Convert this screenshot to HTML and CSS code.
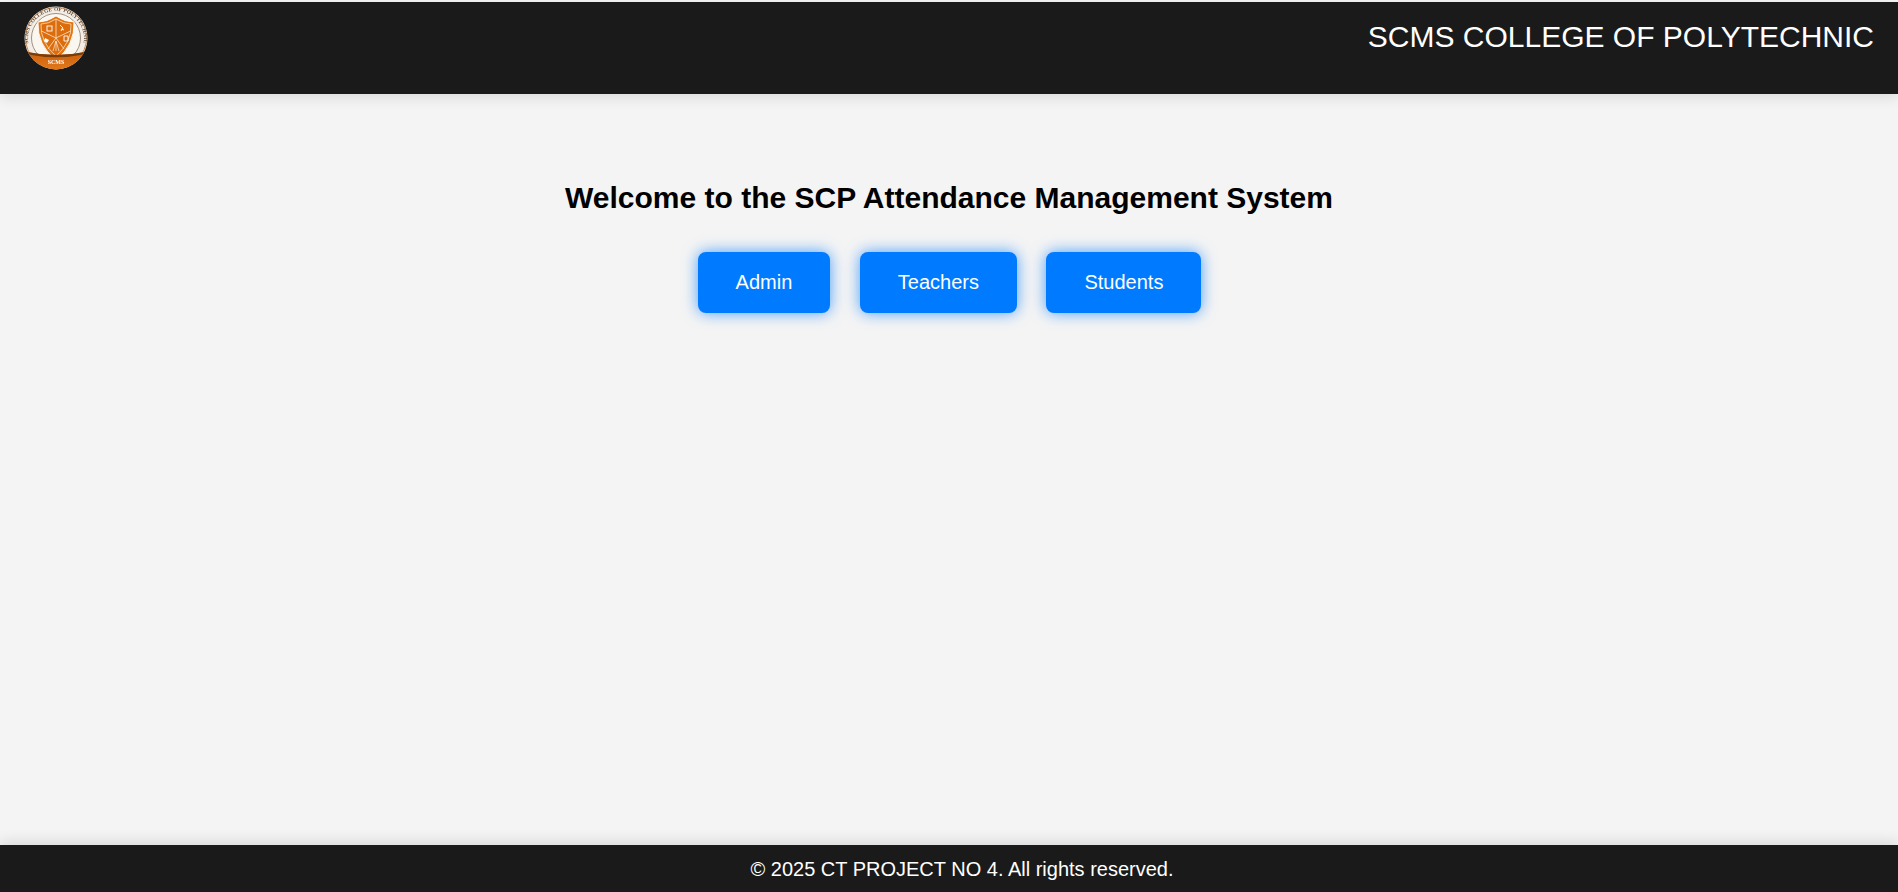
FILE: index.html
```html
<!DOCTYPE html>
<html lang="en">
<head>
<meta charset="utf-8">
<title>SCP Attendance Management System</title>
<link rel="stylesheet" href="styles.css">
</head>
<body>
<header class="site-header">
  <svg class="logo" viewBox="0 0 64 64" aria-label="SCMS logo">
    <defs>
      <path id="ring" d="M5.500 42A28 28 0 1 1 58.500 42"/>
      <clipPath id="disc"><circle cx="32" cy="32" r="31.500"/></clipPath>
      <linearGradient id="band" x1="0" y1="0" x2="0" y2="1">
        <stop offset="0" stop-color="#c9600c"/>
        <stop offset="1" stop-color="#e2791c"/>
      </linearGradient>
    </defs>
    <circle cx="32" cy="32" r="31.500" fill="#f3ede5"/>
    <circle cx="32" cy="32" r="30.500" fill="none" stroke="#c98a50" stroke-width="1"/>
    <circle cx="32" cy="32" r="24.500" fill="#faf6f0" stroke="#8a7a68" stroke-width=".8"/>
    <text class="logo-ring"><textPath href="#ring" startOffset="50%" text-anchor="middle">SCMS COLLEGE OF POLYTECHNIC</textPath></text>
    <path d="M32 10 Q41 16 50 16 Q51 39 32 54 Q13 39 14 16 Q23 16 32 10Z" fill="#e27510" stroke="#fff" stroke-width=".9"/>
    <path d="M32 13 Q39.500 18 47 18 Q48 36 32 50 Q16 36 17 18 Q24.500 18 32 13Z" fill="#dc6d0d" stroke="#f8dfc4" stroke-width=".8"/>
    <path d="M32 13V32M32 32L17.500 25M32 32L46.500 25M32 32L24 43M32 32L40 43" stroke="#fbe6cf" stroke-width=".8" fill="none"/>
    <rect x="23" y="20" width="5" height="5" fill="none" stroke="#fff" stroke-width=".9"/>
    <path d="M36 19l3 3-2 3M37 23l3 1" stroke="#fff" stroke-width=".9" fill="none"/>
    <path d="M21 32l4 2-2 3-3-2z" fill="#fff"/>
    <path d="M40 30h4v5h-4z" fill="none" stroke="#fff" stroke-width=".9"/>
    <path d="M32 35l-3 10M32 35l3 10M32 35v10" stroke="#fff" stroke-width=".6"/>
    <g clip-path="url(#disc)">
      <path d="M3 46 Q32 52 61 46 L64 64 H0Z" fill="url(#band)"/>
      <path d="M3 46 Q32 52 61 46 L60 48.500 Q32 54 4 48.500Z" fill="#7a3c08"/>
    </g>
    <text class="logo-name" x="32" y="58" text-anchor="middle">SCMS</text>
  </svg>
  <h1 class="site-title">SCMS COLLEGE OF POLYTECHNIC</h1>
</header>
<main class="content">
  <h2 class="welcome">Welcome to the SCP Attendance Management System</h2>
  <nav class="actions">
    <a class="btn" href="#">Admin</a>
    <a class="btn" href="#">Teachers</a>
    <a class="btn" href="#">Students</a>
  </nav>
</main>
<footer class="site-footer">© 2025 CT PROJECT NO 4. All rights reserved.</footer>
</body>
</html>
```
FILE: styles.css
```css
* { box-sizing: border-box; }
html, body { height: 100%; }
body {
  margin: 0;
  padding-top: 2px;
  display: flex;
  flex-direction: column;
  background: #f4f4f4;
  color: #000;
  font-family: "Liberation Sans", Arial, sans-serif;
  overflow: hidden;
}
.site-header {
  height: 92px;
  flex: none;
  display: flex;
  justify-content: space-between;
  align-items: flex-start;
  padding: 4px 24px 0;
  background: #1a1a1a;
  color: #fff;
  box-shadow: 0 4px 12px rgba(0, 0, 0, 0.1);
  position: relative;
}
.logo { width: 64px; height: 64px; display: block; filter: blur(0.3px); }
.logo-ring { font: 700 5.4px "Liberation Serif", serif; fill: #5f4d3c; letter-spacing: .15px; }
.logo-name { font: 700 6px "Liberation Serif", serif; fill: #fff; }
.site-title {
  margin: 14px 0 0;
  font-size: 30px;
  line-height: 34px;
  font-weight: 400;
}
.content {
  flex: 1;
  display: flex;
  flex-direction: column;
  align-items: center;
  padding-top: 87px;
}
.welcome {
  margin: 0;
  font-size: 30px;
  line-height: 34px;
  font-weight: 700;
}
.actions {
  display: flex;
  gap: 29.5px;
  margin: 37px 0 0 1px;
}
.btn {
  display: block;
  padding: 19px 38px;
  font-size: 20px;
  line-height: 23px;
  color: #fff;
  text-decoration: none;
  background: #007bff;
  border-radius: 8px;
  box-shadow: 0 0 15px rgba(0, 123, 255, 0.7);
}
.site-footer {
  height: 47px;
  flex: none;
  display: flex;
  align-items: center;
  justify-content: center;
  padding: 1px 0 0 26px;
  background: #1a1a1a;
  color: #fff;
  font-size: 20px;
  box-shadow: 0 -4px 12px rgba(0, 0, 0, 0.1);
  position: relative;
}
```
